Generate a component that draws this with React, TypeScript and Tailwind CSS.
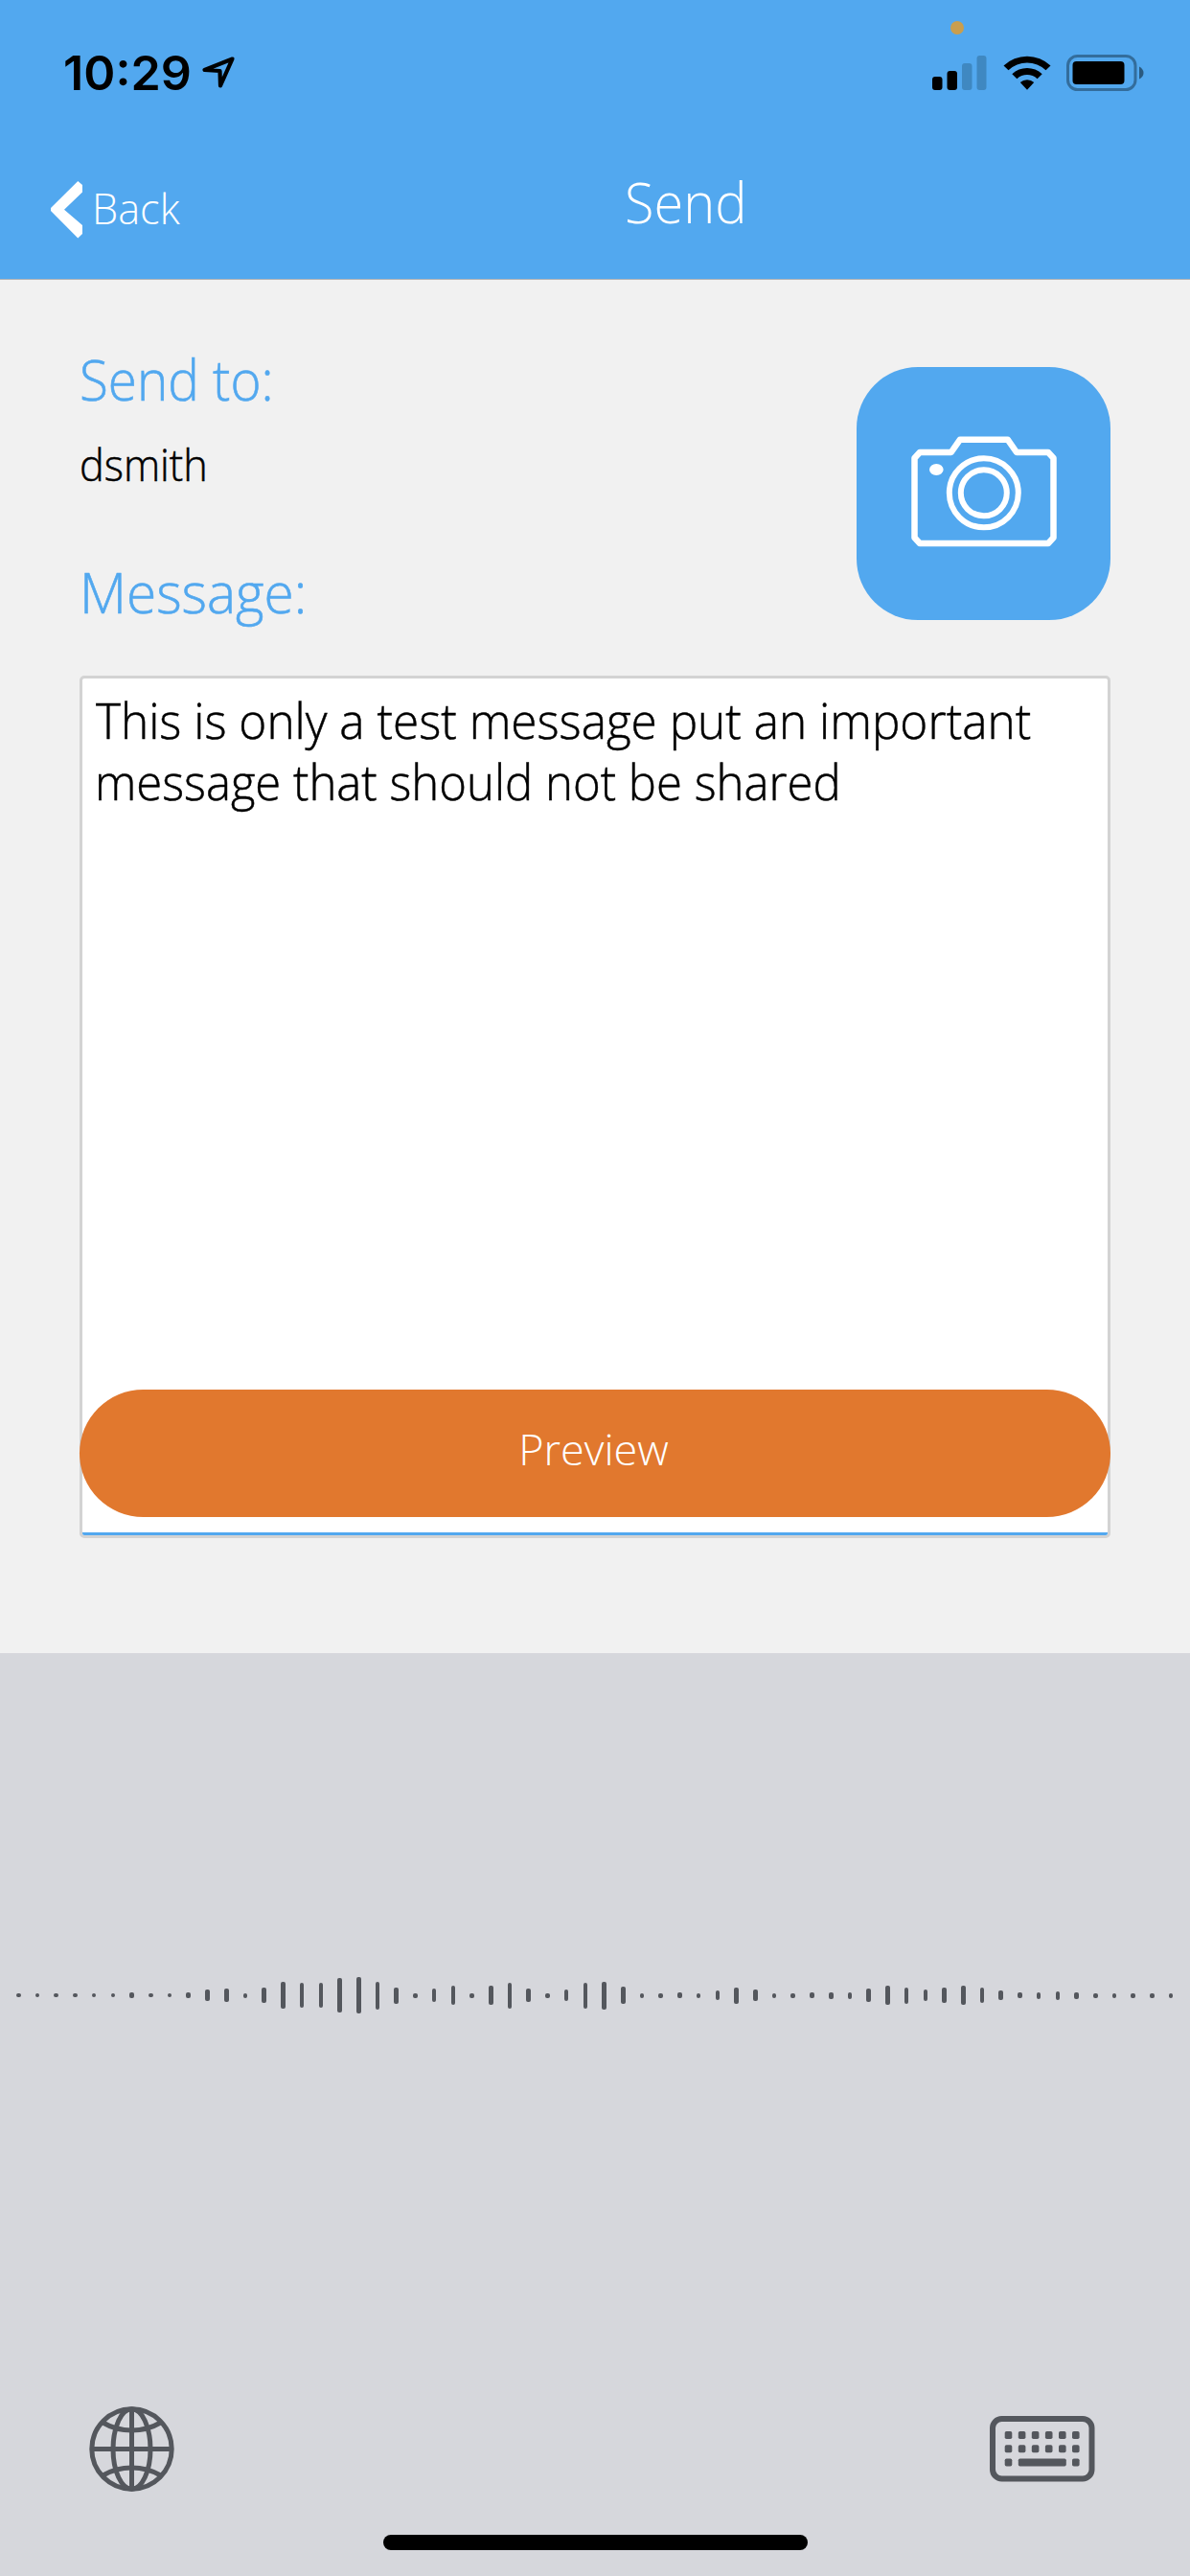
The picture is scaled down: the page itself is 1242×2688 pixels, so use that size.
const LEVELS = [
  4.5, 4.5, 4.5, 4.5, 4.5, 4.5, 6, 4.5, 4.5, 6.5, 12.5, 14, 5, 16, 28.5, 26.5, 26, 35.5, 38, 29, 17, 5, 14, 19.5, 5, 20,
  27, 14, 5, 12.5, 27, 29, 18, 5, 5, 6, 5, 10.5, 17, 12, 5, 5, 5.5, 7, 7, 14, 20, 17, 12.5, 16, 20, 16, 9.5, 6.5, 7, 9,
  7, 5, 5, 5, 5, 5,
];

function StatusBar() {
  return (
    <div className="relative flex h-[134px] items-start justify-between pl-[66px] pr-[47px]">
      <div className="flex items-start pt-[46px]">
        <span className="origin-left scale-x-[1.015] font-['Inter',sans-serif] text-[49.5px] leading-[60px] font-semibold text-black">
          10:29
        </span>
        <svg className="mt-[12px] ml-[12px]" width="36" height="36" viewBox="0 0 36 36" fill="none" stroke="#000" strokeWidth="4.2" strokeLinejoin="round">
          <path d="M32.5 3.5 L3.5 15 L19.5 16 L20 31.5 Z" />
        </svg>
      </div>
      <div className="flex items-start pt-[57px]">
        <svg width="57" height="38" viewBox="0 0 57 38">
          <rect x="0" y="23" width="10.5" height="14" rx="3" fill="#000" />
          <rect x="15.5" y="17" width="10.5" height="20" rx="3" fill="#000" />
          <rect x="31" y="9" width="10.5" height="28" rx="3" fill="#3f88c1" />
          <rect x="46.5" y="1" width="10" height="36" rx="3" fill="#3f88c1" />
        </svg>
        <svg width="50" height="38" viewBox="0 0 50 38" className="ml-[17px]">
          <path d="M0.5 11.5 A35.5 35.5 0 0 1 49.5 11.5 L44.5 16.3 A28.3 28.3 0 0 0 5.5 16.3 Z" />
          <path d="M9.3 20.2 A23 23 0 0 1 40.7 20.2 L35.6 25.2 A15.8 15.8 0 0 0 14.4 25.2 Z" />
          <path d="M17.8 29 A10.5 10.5 0 0 1 32.2 29 L25 36.8 Z" />
        </svg>
        <svg width="82" height="38" viewBox="0 0 82 38" className="ml-[16px]">
          <rect x="1.5" y="1.5" width="70.5" height="35" rx="10" fill="none" stroke="#336d9c" strokeWidth="3" />
          <rect x="6.5" y="7" width="54" height="24" rx="4" />
          <path d="M76 12.5 Q80.5 15 80.5 19 Q80.5 23 76 25.5 Z" fill="#2a5a80" />
        </svg>
      </div>
      <span className="absolute top-[22px] left-[992px] h-[13.5px] w-[14px] rounded-full bg-[#c99e4e]" />
    </div>
  );
}

function NavBar() {
  return (
    <div className="flex h-[157px] items-start text-white">
      <button className="flex w-[599px] items-start pl-[53px] text-left">
        <svg className="mt-[55px]" width="33" height="60" viewBox="0 0 33 60" fill="#fff">
          <path d="M28.3 0 L33 4 V11.5 L14 29.7 L33 46 V55 L28.3 59.5 L0 31 V28 Z" />
        </svg>
        <span className="mt-[53px] ml-[10px] origin-left scale-x-[0.962] text-[45px] leading-[60px]">Back</span>
      </button>
      <h1 className="mt-[36px] ml-[53px] origin-left scale-x-[0.947] text-[59px] leading-[80px]">Send</h1>
    </div>
  );
}

function CameraButton() {
  return (
    <button className="mt-[28px] flex h-[264px] w-[265px] items-center justify-center rounded-[64px] bg-[#52a8ef]">
      <svg width="152" height="117" viewBox="0 0 152 117" fill="none" stroke="#fff" strokeWidth="6.5" className="-mt-[3px]">
        <path d="M3.5 23 L9 17 H41.7 L51 3.7 H100.7 L110 17 H143 L148.5 23 V106 L143 112 H9 L3.5 106 Z" strokeLinejoin="round" />
        <circle cx="75.8" cy="59.3" r="36" strokeWidth="6" />
        <circle cx="75.8" cy="59.3" r="24" strokeWidth="6" />
        <ellipse cx="26.3" cy="35" rx="7.3" ry="6" fill="#fff" stroke="none" />
      </svg>
    </button>
  );
}

function Globe() {
  return (
    <svg width="89" height="89" viewBox="0 0 89 89" fill="none" stroke="#54575d" strokeWidth="5">
      <circle cx="44.5" cy="44.5" r="41.7" />
      <ellipse cx="44.5" cy="44.5" rx="19.5" ry="41.7" />
      <path d="M44.5 2 V87 M2 44.5 H87" />
      <path d="M14.5 17 Q27 25 44.5 25 T74.5 17" stroke="none" />
      <path d="M14.5 17 Q28 25 44.5 25 Q61 25 74.5 17 M14.5 72 Q28 64 44.5 64 Q61 64 74.5 72" />
    </svg>
  );
}

function Keyboard() {
  const cols = [15.7, 29.8, 43.8, 57.9, 72, 86];
  return (
    <svg width="110" height="69" viewBox="0 0 110 69" fill="#54575d">
      <rect x="3" y="3" width="103.5" height="62.5" rx="9.5" fill="none" stroke="#54575d" strokeWidth="6" />
      {cols.map((x) => (
        <g key={x}>
          <rect x={x} y="16" width="7.6" height="8" rx="1.8" />
          <rect x={x} y="30.2" width="7.6" height="8" rx="1.8" />
        </g>
      ))}
      <rect x="15.7" y="44.5" width="7.6" height="8" rx="1.8" />
      <rect x="29.8" y="44.5" width="50" height="8" rx="1.8" />
      <rect x="86" y="44.5" width="7.6" height="8" rx="1.8" />
    </svg>
  );
}

export default function App() {
  return (
    <div className="flex h-[2688px] w-[1242px] flex-col overflow-hidden bg-[#f1f1f1] font-['Open_Sans',sans-serif] font-light text-black">
      <header className="h-[292px] border-b border-[#b0b3b6] bg-[#52a8ef]">
        <StatusBar />
        <NavBar />
      </header>
      <main className="h-[1433px] px-[83px]">
        <div className="flex h-[413px] items-start justify-between pt-[63px]">
          <div className="flex flex-col items-start">
            <h2 className="origin-left scale-x-[0.928] text-[59px] leading-[80px] text-[#52a8ef] [-webkit-text-stroke:0.6px_#52a8ef]">Send to:</h2>
            <p className="mt-[19px] origin-left scale-x-[0.94] text-[46px] leading-[60px] [-webkit-text-stroke:0.5px_#000]">dsmith</p>
            <h2 className="mt-[63px] origin-left scale-x-[0.962] text-[59px] leading-[80px] text-[#52a8ef] [-webkit-text-stroke:0.6px_#52a8ef]">Message:</h2>
          </div>
          <CameraButton />
        </div>
        <div className="relative h-[900px] rounded-[5px] border-[3px] border-[#d3d3d3] bg-white pt-[11px] pl-[14px]">
          <p className="text-[51.5px] leading-[64px] whitespace-nowrap [-webkit-text-stroke:0.5px_#000]">
            <span className="block origin-left scale-x-[0.961]">This is only a test message put an important</span>
            <span className="-ml-[1px] block origin-left scale-x-[0.952]">message that should not be shared</span>
          </p>
          <button className="absolute top-[742px] -left-[3px] flex h-[133px] w-[1076px] items-center justify-center rounded-full bg-[#e1782e] pr-[3px] pb-[10px] text-[45px] leading-[60px] text-white">
            Preview
          </button>
          <span className="absolute inset-x-0 bottom-0 h-[3px] rounded-b-[2px] bg-[#52a8ef]" />
        </div>
      </main>
      <section className="flex h-[963px] flex-col items-center bg-[#d6d7dc]">
        <div className="mt-[337px] flex h-[40px] w-full items-center justify-between px-[17px]">
          {LEVELS.map((h, i) => (
            <span key={i} className="w-[4.6px] rounded-[2px] bg-[#54575d]" style={{ height: h }} />
          ))}
        </div>
        <div className="mt-[409px] flex h-[89px] w-full items-center justify-between pr-[99px] pl-[92.5px]">
          <Globe />
          <Keyboard />
        </div>
        <div className="mt-[45px] h-[16px] w-[443px] rounded-full bg-black" />
      </section>
    </div>
  );
}
